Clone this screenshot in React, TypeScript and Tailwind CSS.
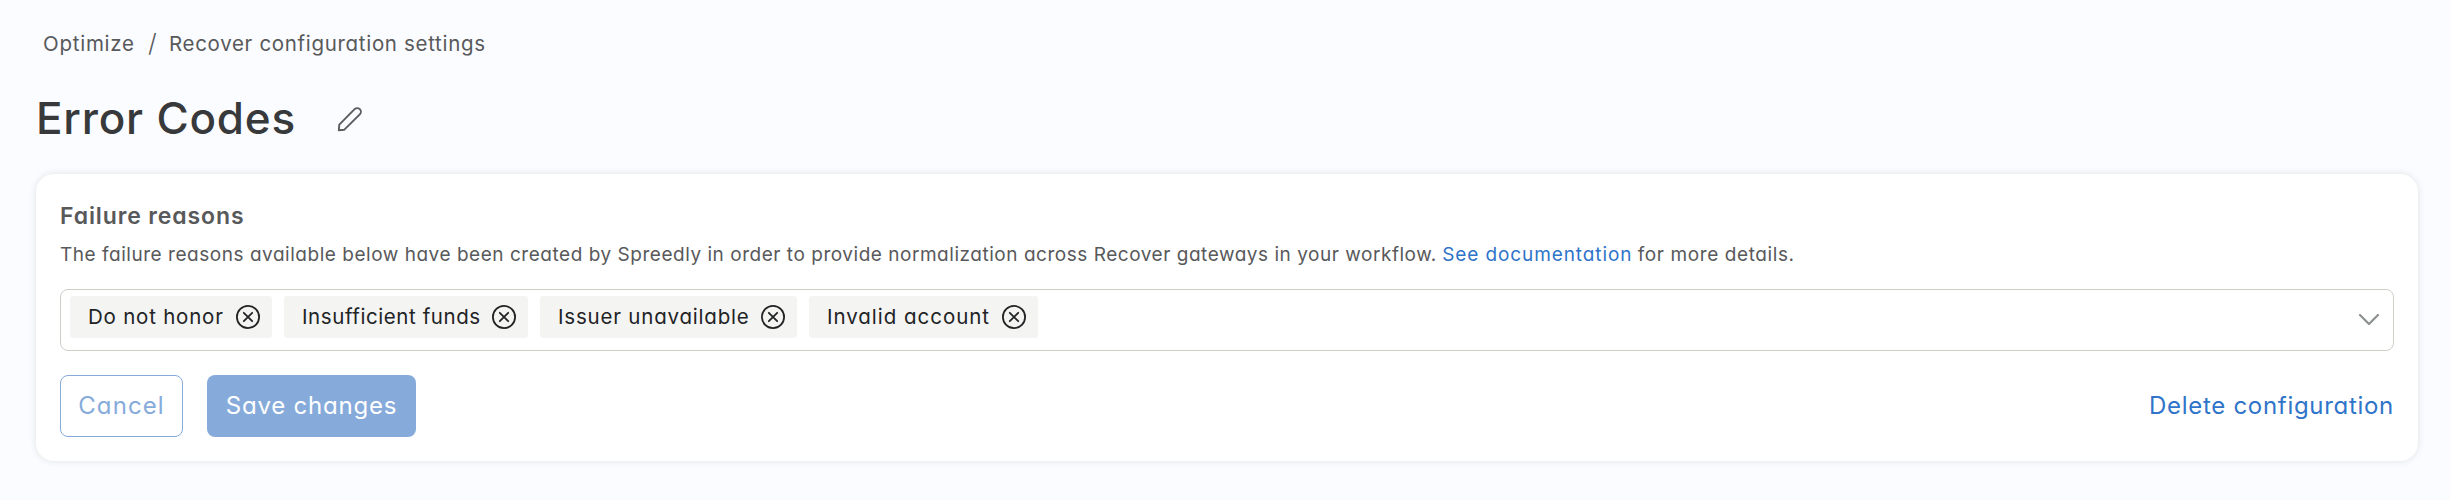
import { useState } from "react";

const initialReasons = [
  { label: "Do not honor", width: "w-[202px]", tracking: "tracking-[0.78px]" },
  { label: "Insufficient funds", width: "w-[244px]", tracking: "tracking-[0.58px]" },
  { label: "Issuer unavailable", width: "w-[257px]", tracking: "tracking-[0.8px]" },
  { label: "Invalid account", width: "w-[229px]", tracking: "tracking-[0.97px]" },
];

const PencilIcon = () => (
  <svg width="26" height="26" viewBox="0 0 26 26" fill="none" stroke="#5b5c5c" strokeWidth="1.9" strokeLinejoin="round">
    <path d="M1.8 24.2 L2.3 18.6 L17.6 3.2 A3.6 3.6 0 0 1 22.8 8.4 L7.4 23.7 Z" />
  </svg>
);

const RemoveIcon = () => (
  <svg width="24" height="24" viewBox="0 0 24 24" fill="none" stroke="#222325" strokeWidth="1.8" strokeLinecap="round">
    <circle cx="12" cy="12" r="11.1" />
    <path d="M7.8 7.8 L16.2 16.2 M16.2 7.8 L7.8 16.2" />
  </svg>
);

const ChevronIcon = () => (
  <svg width="22" height="14" viewBox="0 0 22 14" fill="none" stroke="#8b9091" strokeWidth="2.2" strokeLinecap="round" strokeLinejoin="round">
    <path d="M2 2 L11 11 L20 2" />
  </svg>
);

const App = () => {
  const [reasons, setReasons] = useState(initialReasons);

  const removeReason = (label: string) => {
    setReasons(reasons.filter((r) => r.label !== label));
  };

  return (
    <div className="h-[500px] w-full bg-[#fbfcff] pl-9 pr-8 pt-7 font-['Inter',sans-serif] [font-feature-settings:'cv11'] whitespace-nowrap">
      <nav className="flex h-8 items-center pl-[7px] text-[20.5px] text-[#58595b]">
        <a className="w-[105px] tracking-[0.75px]">Optimize</a>
        <span className="w-[21px] text-[25px] font-light">/</span>
        <a className="tracking-[0.68px]">Recover configuration settings</a>
      </nav>

      <div className="mt-[31px] flex h-[54px] items-center">
        <h1 className="w-[301px] text-[44px] font-medium tracking-[0.8px] text-[#37393b]">Error Codes</h1>
        <button className="mt-[2px]">
          <PencilIcon />
        </button>
      </div>

      <section className="mt-[29px] h-[287px] rounded-[18px] bg-white px-6 pt-[26px] shadow-[0_0_7px_rgba(40,45,60,0.13)]">
        <h2 className="h-8 text-[23px] leading-8 font-semibold tracking-[0.88px] text-[#58595b]">Failure reasons</h2>
        <p className="mt-[9px] h-7 text-[19px] leading-7 text-[#58595b]">
          <span className="tracking-[0.53px]">
            The failure reasons available below have been created by Spreedly in order to provide normalization across Recover gateways in your workflow.
          </span>{" "}
          <a className="tracking-[0.9px] text-[#2f74c9]">See documentation</a>{" "}
          <span className="tracking-[0.6px]">for more details.</span>
        </p>

        <div className="mt-5 flex h-[62px] items-start justify-between rounded-lg border border-[#cfcfca] pt-[6px] pl-[9px] pr-[13px]">
          <div className="flex gap-3">
            {reasons.map((reason) => (
              <div
                key={reason.label}
                className={`flex h-[42px] items-center justify-between rounded-[3px] bg-[#f4f4f3] pl-[18px] pr-3 text-[20.5px] text-[#222325] ${reason.width}`}
              >
                <span className={reason.tracking}>{reason.label}</span>
                <button onClick={() => removeReason(reason.label)}>
                  <RemoveIcon />
                </button>
              </div>
            ))}
          </div>
          <span className="mt-[17px]">
            <ChevronIcon />
          </span>
        </div>

        <div className="mt-6 flex h-[62px] items-center text-[24px]">
          <button className="h-full w-[123px] rounded-lg border border-[#86abdb] tracking-[1.1px] text-[#86abdb]">Cancel</button>
          <button className="ml-6 h-full w-[209px] rounded-lg bg-[#86abdb] tracking-[0.8px] text-white">Save changes</button>
          <a className="ml-auto tracking-[0.7px] text-[#2f74c9]">Delete configuration</a>
        </div>
      </section>
    </div>
  );
};

export default App;
